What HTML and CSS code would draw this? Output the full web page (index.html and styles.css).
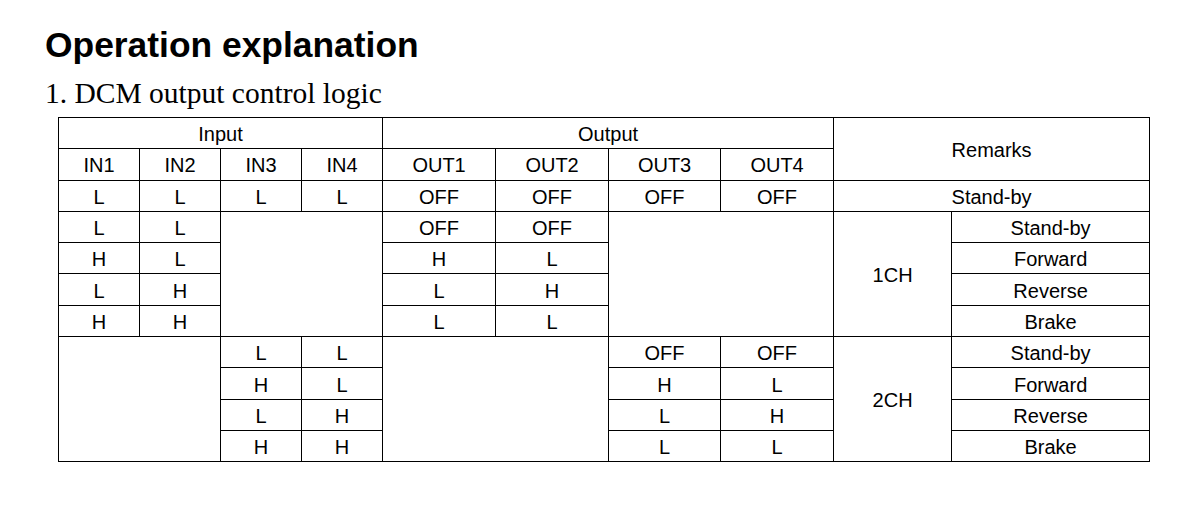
FILE: index.html
```html
<!DOCTYPE html>
<html lang="en">
<head>
<meta charset="utf-8">
<title>Operation explanation</title>
<link rel="stylesheet" href="styles.css">
</head>
<body>
<div class="page">
  <h1 class="title">Operation explanation</h1>
  <h2 class="subtitle">1. DCM output control logic</h2>
  <table class="logic">
    <colgroup>
      <col class="c-in"><col class="c-in"><col class="c-in"><col class="c-in">
      <col class="c-out"><col class="c-out"><col class="c-out2"><col class="c-out">
      <col class="c-ch"><col class="c-rem">
    </colgroup>
    <tbody>
      <tr><td colspan="4">Input</td><td colspan="4">Output</td><td colspan="2" rowspan="2">Remarks</td></tr>
      <tr><td>IN1</td><td>IN2</td><td>IN3</td><td>IN4</td><td>OUT1</td><td>OUT2</td><td>OUT3</td><td>OUT4</td></tr>
      <tr><td>L</td><td>L</td><td>L</td><td>L</td><td>OFF</td><td>OFF</td><td>OFF</td><td>OFF</td><td colspan="2">Stand-by</td></tr>
      <tr><td>L</td><td>L</td><td colspan="2" rowspan="4"></td><td>OFF</td><td>OFF</td><td colspan="2" rowspan="4"></td><td rowspan="4">1CH</td><td>Stand-by</td></tr>
      <tr><td>H</td><td>L</td><td>H</td><td>L</td><td>Forward</td></tr>
      <tr><td>L</td><td>H</td><td>L</td><td>H</td><td>Reverse</td></tr>
      <tr><td>H</td><td>H</td><td>L</td><td>L</td><td>Brake</td></tr>
      <tr><td colspan="2" rowspan="4"></td><td>L</td><td>L</td><td colspan="2" rowspan="4"></td><td>OFF</td><td>OFF</td><td rowspan="4">2CH</td><td>Stand-by</td></tr>
      <tr><td>H</td><td>L</td><td>H</td><td>L</td><td>Forward</td></tr>
      <tr><td>L</td><td>H</td><td>L</td><td>H</td><td>Reverse</td></tr>
      <tr><td>H</td><td>H</td><td>L</td><td>L</td><td>Brake</td></tr>
    </tbody>
  </table>
</div>
</body>
</html>
```
FILE: styles.css
```css
html, body {
  margin: 0;
  padding: 0;
  background: #ffffff;
  color: #000000;
}

.page {
  padding: 25px 0 0 45px;
}

.title {
  margin: 0;
  font-family: "Liberation Sans", Arial, sans-serif;
  font-weight: bold;
  font-size: 35.4px;
  line-height: 40px;
}

.subtitle {
  margin: 11px 0 0 0;
  font-family: "Liberation Serif", "Times New Roman", serif;
  font-weight: normal;
  font-size: 29.5px;
  line-height: 34px;
}

.logic {
  margin: 7px 0 0 13px;
  border-collapse: collapse;
  table-layout: fixed;
  width: 1092px;
  font-family: "Liberation Sans", Arial, sans-serif;
  font-size: 20px;
}

.c-in { width: 81px; }
.c-out { width: 113px; }
.c-out2 { width: 112px; }
.c-ch { width: 118px; }
.c-rem { width: 198px; }

.logic tr {
  height: 31.3px;
}

.logic td {
  border: 1px solid #000000;
  padding: 3px 0 0 0;
  text-align: center;
  vertical-align: middle;
  line-height: 23px;
  white-space: nowrap;
}
```
